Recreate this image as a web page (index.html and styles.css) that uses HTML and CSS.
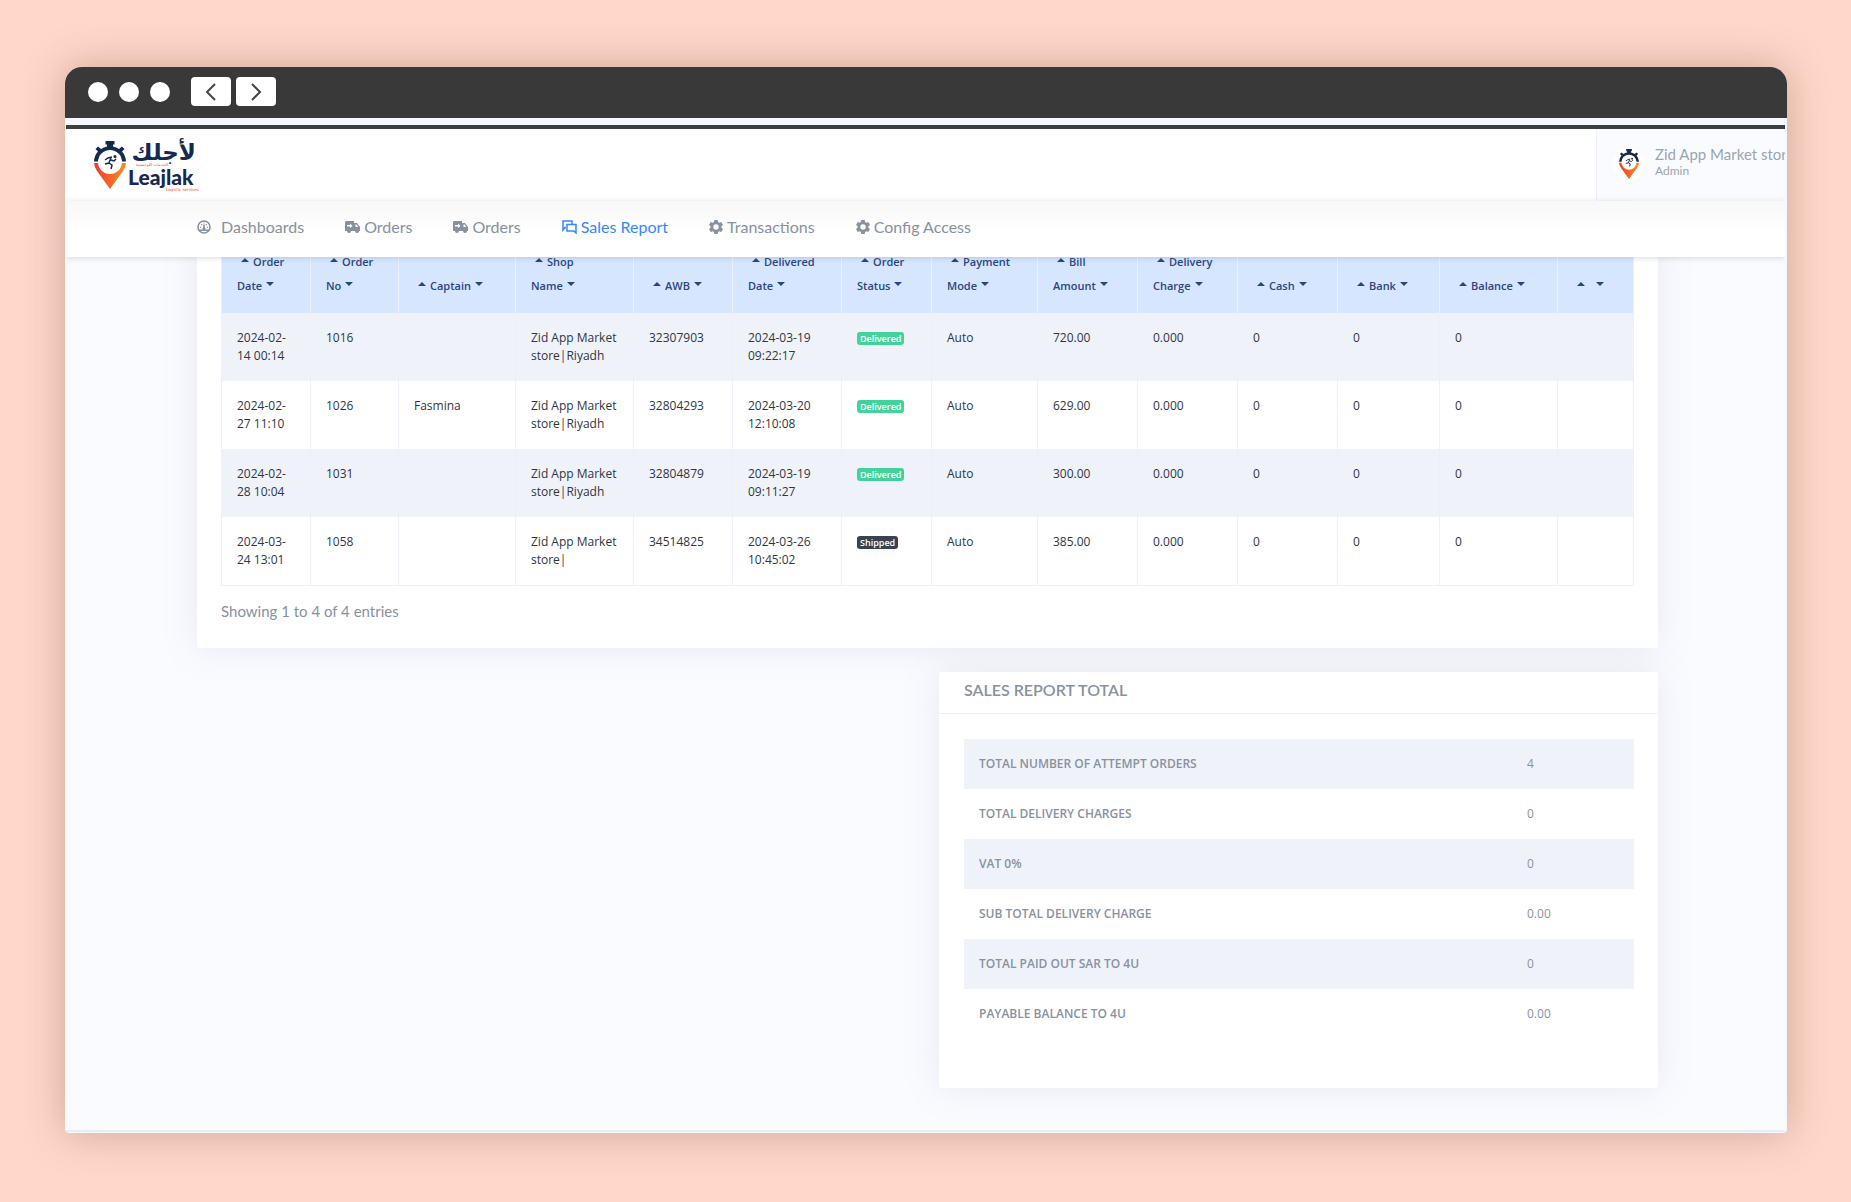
FILE: index.html
```html
<!DOCTYPE html>
<html lang="en">
<head>
  <meta charset="UTF-8" />
  <title>Leajlak - Sales Report</title>
  <link rel="stylesheet" href="styles.css">
</head>
<body>
  <!-- shared icons -->
  <svg class="sprite" aria-hidden="true">
    <defs>
      <linearGradient id="pinGradient" x1="0" y1="0" x2="1" y2="0">
        <stop offset="0" stop-color="#ee3a32" />
        <stop offset="1" stop-color="#f78f1e" />
      </linearGradient>
    </defs>
    <symbol id="pin" viewBox="0 0 32 48">
      <path d="M0 22a16 16 0 0 0 3 8l13 18 13-18a16 16 0 0 0 3-8z" fill="url(#pinGradient)" />
      <path d="M0 20.500a16 16 0 0 1 4-10L1.500 8 4 5.500l3 2.500a16 16 0 0 1 6-2.500V3.500h-1.500V0h9v3.500H19v2A16 16 0 0 1 25 8l3-2.500L30.500 8 28 10.500a16 16 0 0 1 4 10z" fill="#16294f" />
      <circle cx="16" cy="21" r="12" fill="#fff" />
      <path d="M18 16l-4 1-3 2M17 17l-2 5 3 2-1 4M15 22l-4 1M17 19l3 1 2-2" fill="none" stroke="#16294f" stroke-width="1.500" />
      <circle cx="21" cy="15.500" r="1.500" fill="#16294f" />
    </symbol>
    <symbol id="truck" viewBox="0 0 15 12">
      <path d="M1 0h8v2h3l3 4v4h-1a2 2 0 0 1-4 0H6a2 2 0 0 1-4 0H0V1z" fill="currentColor" />
      <path d="M10.500 3.500h1.200L13.200 6h-2.700zM2 4h3V2.500L7.500 5 5 7V5.500H2z" fill="#fff" />
    </symbol>
    <symbol id="gear" viewBox="0 0 14 14">
      <path d="M5.300 0h3.400l.4 2 1.200.7 2-.7L14 5l-1.600 1.300v1.400L14 9l-1.700 3-2-.7-1.200.7-.4 2H5.300l-.4-2-1.200-.7-2 .7L0 9l1.600-1.300V6.300L0 5l1.700-3 2 .7L4.900 2zM7 4.300a2.700 2.700 0 1 0 0 5.400 2.700 2.700 0 0 0 0-5.400z" fill="currentColor" fill-rule="evenodd" />
    </symbol>
  </svg>

  <div class="window">
    <div class="titlebar">
      <span class="dot"></span>
      <span class="dot"></span>
      <span class="dot"></span>
      <button class="arrow-btn" aria-label="Back">
        <svg width="12" height="20" viewBox="0 0 12 20"><path d="M10 2L2 10l8 8" /></svg>
      </button>
      <button class="arrow-btn" aria-label="Forward">
        <svg width="12" height="20" viewBox="0 0 12 20"><path d="M2 2l8 8-8 8" /></svg>
      </button>
    </div>

    <div class="page">
      <header class="topbar">
        <a href="#" class="logo" aria-label="Leajlak">
          <svg width="102" height="52" viewBox="0 0 102 52">
            <use href="#pin" x="0" y="0" width="32" height="48" />
            <text x="102" y="19" class="logo-ar">لأجلك</text>
            <text x="74" y="25" class="logo-tag logo-tag-ar">للخدمات اللوجستية</text>
            <text x="34" y="44" class="logo-en">Leajlak</text>
            <text x="72" y="50" class="logo-tag">Logistic services</text>
          </svg>
        </a>
        <div class="user">
          <span class="avatar"><svg width="20" height="30"><use href="#pin" /></svg></span>
          <div class="user-text">
            <div class="user-name">Zid App Market store</div>
            <div class="user-role">Admin</div>
          </div>
        </div>
      </header>

      <nav class="menu">
        <a href="#" class="menu-wide">
          <svg width="14" height="14" viewBox="0 0 14 14" fill="none" stroke="currentColor">
            <circle cx="7" cy="7" r="6" stroke-width="1.600" />
            <path d="M2.500 10.300h9M7 8.500V4.500" stroke-width="1.600" />
            <path d="M3 7.300h1.200M9.800 7.300H11M4.300 4.200l.8.800M9.700 4.200l-.8.800M7 2.500v1" stroke-width="1.100" />
            <circle cx="7" cy="8.500" r="1.500" fill="currentColor" stroke="none" />
          </svg>
          Dashboards
        </a>
        <a href="#"><svg width="15" height="12"><use href="#truck" /></svg>Orders</a>
        <a href="#"><svg width="15" height="12"><use href="#truck" /></svg>Orders</a>
        <a href="#" class="active">
          <svg width="15" height="14" viewBox="0 0 15 14" fill="none" stroke="currentColor" stroke-width="1.500">
            <path d="M4 7.500H3L1 10V1h9v3M5 4.500h9V13l-2-2H5z" />
          </svg>Sales Report
        </a>
        <a href="#"><svg width="14" height="14"><use href="#gear" /></svg>Transactions</a>
        <a href="#"><svg width="14" height="14"><use href="#gear" /></svg>Config Access</a>
      </nav>

      <main class="content">
        <section class="card orders-card">
          <table class="orders">
            <thead>
              <tr>
                <th><i class="up"></i>Order<br>Date<i class="down"></i></th>
                <th><i class="up"></i>Order<br>No<i class="down"></i></th>
                <th><i class="up"></i>Captain<i class="down"></i></th>
                <th><i class="up"></i>Shop<br>Name<i class="down"></i></th>
                <th><i class="up"></i>AWB<i class="down"></i></th>
                <th><i class="up"></i>Delivered<br>Date<i class="down"></i></th>
                <th><i class="up"></i>Order<br>Status<i class="down"></i></th>
                <th><i class="up"></i>Payment<br>Mode<i class="down"></i></th>
                <th><i class="up"></i>Bill<br>Amount<i class="down"></i></th>
                <th><i class="up"></i>Delivery<br>Charge<i class="down"></i></th>
                <th><i class="up"></i>Cash<i class="down"></i></th>
                <th><i class="up"></i>Bank<i class="down"></i></th>
                <th><i class="up"></i>Balance<i class="down"></i></th>
                <th><i class="up"></i> <i class="down"></i></th>
              </tr>
            </thead>
            <tbody>
              <tr>
                <td>2024-02-14 00:14</td><td>1016</td><td></td><td>Zid App Market store|Riyadh</td><td>32307903</td>
                <td>2024-03-19 09:22:17</td><td><span class="badge">Delivered</span></td><td>Auto</td><td>720.00</td>
                <td>0.000</td><td>0</td><td>0</td><td>0</td><td></td>
              </tr>
              <tr>
                <td>2024-02-27 11:10</td><td>1026</td><td>Fasmina</td><td>Zid App Market store|Riyadh</td><td>32804293</td>
                <td>2024-03-20 12:10:08</td><td><span class="badge">Delivered</span></td><td>Auto</td><td>629.00</td>
                <td>0.000</td><td>0</td><td>0</td><td>0</td><td></td>
              </tr>
              <tr>
                <td>2024-02-28 10:04</td><td>1031</td><td></td><td>Zid App Market store|Riyadh</td><td>32804879</td>
                <td>2024-03-19 09:11:27</td><td><span class="badge">Delivered</span></td><td>Auto</td><td>300.00</td>
                <td>0.000</td><td>0</td><td>0</td><td>0</td><td></td>
              </tr>
              <tr>
                <td>2024-03-24 13:01</td><td>1058</td><td></td><td>Zid App Market store|</td><td>34514825</td>
                <td>2024-03-26 10:45:02</td><td><span class="badge badge-dark">Shipped</span></td><td>Auto</td><td>385.00</td>
                <td>0.000</td><td>0</td><td>0</td><td>0</td><td></td>
              </tr>
            </tbody>
          </table>
          <p class="entries">Showing 1 to 4 of 4 entries</p>
        </section>

        <section class="card total-card">
          <h4>Sales Report Total</h4>
          <table class="totals">
            <tr><th>Total Number of Attempt Orders</th><td>4</td></tr>
            <tr><th>Total Delivery Charges</th><td>0</td></tr>
            <tr><th>VAT 0%</th><td>0</td></tr>
            <tr><th>Sub Total Delivery Charge</th><td>0.00</td></tr>
            <tr><th>Total Paid Out SAR to 4U</th><td>0</td></tr>
            <tr><th>Payable Balance to 4U</th><td>0.00</td></tr>
          </table>
        </section>
      </main>
    </div>
  </div>
</body>
</html>
```
FILE: styles.css
```css
* {
  box-sizing: border-box;
}

body {
  margin: 0;
  min-height: 100vh;
  padding: 67px 64px 69px 65px;
  background: #ffd8cb;
  font-family: Lato, "Open Sans", sans-serif;
  font-size: 16px;
  color: #86929f;
  display: flex;
}

a {
  color: inherit;
  text-decoration: none;
}

.sprite {
  position: absolute;
  width: 0;
  height: 0;
}

/* browser window */
.window {
  flex: 1;
  min-width: 0;
  display: flex;
  flex-direction: column;
  background: #f5f8ff;
  border-radius: 17px 17px 4px 4px;
  box-shadow: 0 0 40px rgba(110, 70, 40, 0.34);
}

.titlebar {
  height: 51px;
  padding: 0 23px 2px;
  background: #393939;
  border-radius: 17px 17px 0 0;
  display: flex;
  align-items: center;
  gap: 11px;
}

.dot {
  width: 20px;
  height: 20px;
  border-radius: 50%;
  background: #fff;
}

.arrow-btn {
  width: 40px;
  height: 29px;
  padding: 0;
  border: none;
  border-radius: 4px;
  background: #fff;
  display: flex;
  align-items: center;
  justify-content: center;
}

.dot + .arrow-btn {
  margin-left: 10px;
}

.arrow-btn + .arrow-btn {
  margin-left: -6px;
}

.arrow-btn path {
  fill: none;
  stroke: #444;
  stroke-width: 2;
}

.page {
  flex: 1;
  margin: 7px 2px 1px 1px;
  border-top: 4px solid #3c3f42;
  border-bottom: 2px solid #e8edf3;
  background: #fafbff;
  overflow: hidden;
}

/* header */
.topbar {
  height: 72px;
  background: #fff;
  display: flex;
  justify-content: space-between;
}

.logo {
  padding: 12px 0 0 28px;
}

.logo svg {
  overflow: visible;
}

.logo-ar {
  font: bold 23px "DejaVu Sans", sans-serif;
  fill: #16294f;
  text-anchor: start;
  direction: rtl;
}

.logo-en {
  font: 900 21px Lato, sans-serif;
  fill: #16294f;
}

.logo-tag {
  font: 4px "DejaVu Sans", sans-serif;
  fill: #ee4a36;
}

.logo-tag-ar {
  direction: rtl;
}

.user {
  width: 189px;
  padding: 0 0 2px 16px;
  background: #fafbfe;
  border-left: 1px solid #f0f2fa;
  display: flex;
  align-items: center;
  gap: 10px;
  overflow: hidden;
  white-space: nowrap;
  color: #98a6ad;
}

.avatar {
  flex: none;
  width: 32px;
  height: 32px;
  border-radius: 50%;
  background: #fff;
  display: flex;
  align-items: center;
  justify-content: center;
}

.user-text {
  padding-bottom: 4px;
}

.user-name {
  font-size: 15px;
  line-height: 18px;
}

.user-role {
  font-size: 12px;
  line-height: 16px;
}

.menu {
  position: relative;
  z-index: 1;
  height: 56px;
  padding: 0 131px 5px;
  background: linear-gradient(#f8f8f8, #fff 60%);
  box-shadow: 0 1px 6px rgba(100, 110, 130, 0.25);
  display: flex;
  align-items: center;
  gap: 41px;
}

.menu a {
  display: flex;
  align-items: center;
  gap: 4px;
}

.menu .menu-wide {
  gap: 10px;
}

.menu .active {
  color: #3688fc;
}

.content {
  margin-top: -23px;
  padding: 0 127px 42px 131px;
  display: flex;
  flex-direction: column;
  gap: 24px;
}

.card {
  background: #fff;
  border-radius: 3px;
  box-shadow: 0 0 35px rgba(140, 150, 170, 0.17);
}

.orders-card {
  padding: 0 24px 25px;
}

table {
  width: 100%;
  border-collapse: collapse;
  font-family: "Open Sans", sans-serif;
  font-size: 12px;
  text-align: left;
}

.orders {
  table-layout: fixed;
  color: #30363f;
  line-height: 18px;
  border-bottom: 1px solid #edf0f7;
}

.orders th,
.orders td {
  padding: 16px 15px;
  vertical-align: top;
  border-left: 1px solid #edf0f7;
  border-right: 1px solid #edf0f7;
}

.orders th {
  padding: 16px 0 15px 15px;
  vertical-align: bottom;
  line-height: 24px;
  font-size: 11px;
  font-weight: 600;
  color: #2b4580;
  background: #d6e6ff;
}

.orders th:nth-child(1) { width: 89px; }
.orders th:nth-child(2) { width: 88px; }
.orders th:nth-child(3) { width: 117px; }
.orders th:nth-child(4) { width: 118px; }
.orders th:nth-child(5) { width: 99px; }
.orders th:nth-child(6) { width: 109px; }
.orders th:nth-child(7) { width: 90px; }
.orders th:nth-child(8) { width: 106px; }
.orders th:nth-child(9) { width: 100px; }
.orders th:nth-child(10) { width: 100px; }
.orders th:nth-child(11) { width: 100px; }
.orders th:nth-child(12) { width: 102px; }
.orders th:nth-child(13) { width: 118px; }
.orders th:nth-child(14) { width: 76px; }

.orders tbody tr:nth-child(odd),
.totals tr:nth-child(odd) {
  background: #eff2f9;
}

.up,
.down {
  display: inline-block;
  vertical-align: 4px;
  border: 4px solid transparent;
}

.up {
  margin: 0 4px;
  border-top: none;
  border-bottom-color: #24458c;
}

.down {
  margin-left: 4px;
  border-bottom: none;
  border-top-color: #24458c;
}

.badge {
  display: inline-block;
  padding: 0 3px;
  border-radius: 3px;
  background: #42d29d;
  color: #fff;
  font-size: 9px;
  font-weight: 600;
  line-height: 13px;
}

.badge-dark {
  background: #3a4150;
}

.entries {
  margin: 14px 0 0;
  font-size: 15px;
  line-height: 23px;
}

.total-card {
  align-self: flex-end;
  width: 719px;
  max-width: 100%;
  padding-bottom: 49px;
}

.total-card h4 {
  margin: 0 0 25px;
  padding: 7px 25px 12px;
  border-bottom: 1px solid #eef0f4;
  font-size: 16px;
  font-weight: 600;
  line-height: 22px;
  text-transform: uppercase;
}

.totals {
  width: calc(100% - 49px);
  margin-left: 25px;
  line-height: 18px;
}

.totals th,
.totals td {
  padding: 16px 15px;
}

.totals th {
  font-weight: 600;
  text-transform: uppercase;
}

.totals td {
  width: 122px;
}
```
